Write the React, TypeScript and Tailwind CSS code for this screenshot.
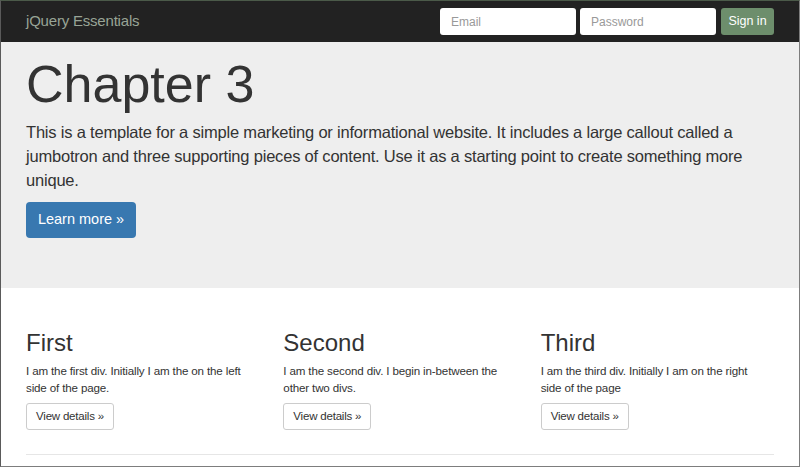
const font = { fontFamily: '"Liberation Sans", Arial, Helvetica, sans-serif' }

const columns = [
  { title: 'First', text: 'I am the first div. Initially I am the on the left side of the page.' },
  { title: 'Second', text: 'I am the second div. I begin in-between the other two divs.' },
  { title: 'Third', text: 'I am the third div. Initially I am on the right side of the page' },
]

export default function App() {
  return (
    <div
      className="w-[800px] h-[467px] overflow-hidden border border-[#7d7d7d] border-t-[#4b5a49] border-l-[#5a5a5a] bg-white text-[#333]"
      style={font}
    >
      {/* navbar */}
      <nav className="h-[41px] bg-[#222] flex items-center justify-between px-[25px]">
        <span className="text-[15px] tracking-[-0.2px] text-[#98a496]">jQuery Essentials</span>
        <form className="flex items-center" onSubmit={e => e.preventDefault()}>
          <input
            placeholder="Email"
            className="w-[136px] h-[27px] rounded-[3px] bg-white px-[11px] text-[12px] placeholder:text-[#999] outline-none"
          />
          <input
            type="password"
            placeholder="Password"
            className="ml-[4px] w-[136px] h-[27px] rounded-[3px] bg-white px-[11px] text-[12px] placeholder:text-[#999] outline-none"
          />
          <button className="ml-[5px] w-[53px] h-[27px] rounded-[3px] bg-[#6d8e6c] text-[12.5px] text-white">
            Sign in
          </button>
        </form>
      </nav>

      {/* jumbotron */}
      <section className="h-[246px] bg-[#eeeeee] px-[25px] pt-[14px]">
        <h1 className="text-[52px] leading-[57px] text-[#333]">Chapter 3</h1>
        <p className="mt-[7px] text-[16.5px] leading-[24px] tracking-[-0.2px] text-[#333]">
          This is a template for a simple marketing or informational website. It includes a large callout called a
          jumbotron and three supporting pieces of content. Use it as a starting point to create something more
          unique.
        </p>
        <button className="mt-[10px] h-[36px] w-[110px] rounded-[4px] bg-[#3878b0] text-[14.5px] text-white">
          Learn more »
        </button>
      </section>

      {/* columns */}
      <section className="px-[25px]">
        <div className="grid grid-cols-3 gap-[24px] pt-[42px]">
          {columns.map(c => (
            <div key={c.title}>
              <h2 className="text-[24px] leading-[26px] text-[#333]">{c.title}</h2>
              <p className="mt-[7px] pr-[10px] text-[11.6px] leading-[16.5px] tracking-[-0.15px] text-[#333]">{c.text}</p>
              <button className="mt-[7px] h-[27px] w-[88px] rounded-[3px] border border-[#ccc] bg-white text-[11.5px] tracking-[-0.2px] text-[#333]">
                View details »
              </button>
            </div>
          ))}
        </div>
        <hr className="mt-[24px] border-t border-[#e6e6e6]" />
      </section>
    </div>
  )
}
